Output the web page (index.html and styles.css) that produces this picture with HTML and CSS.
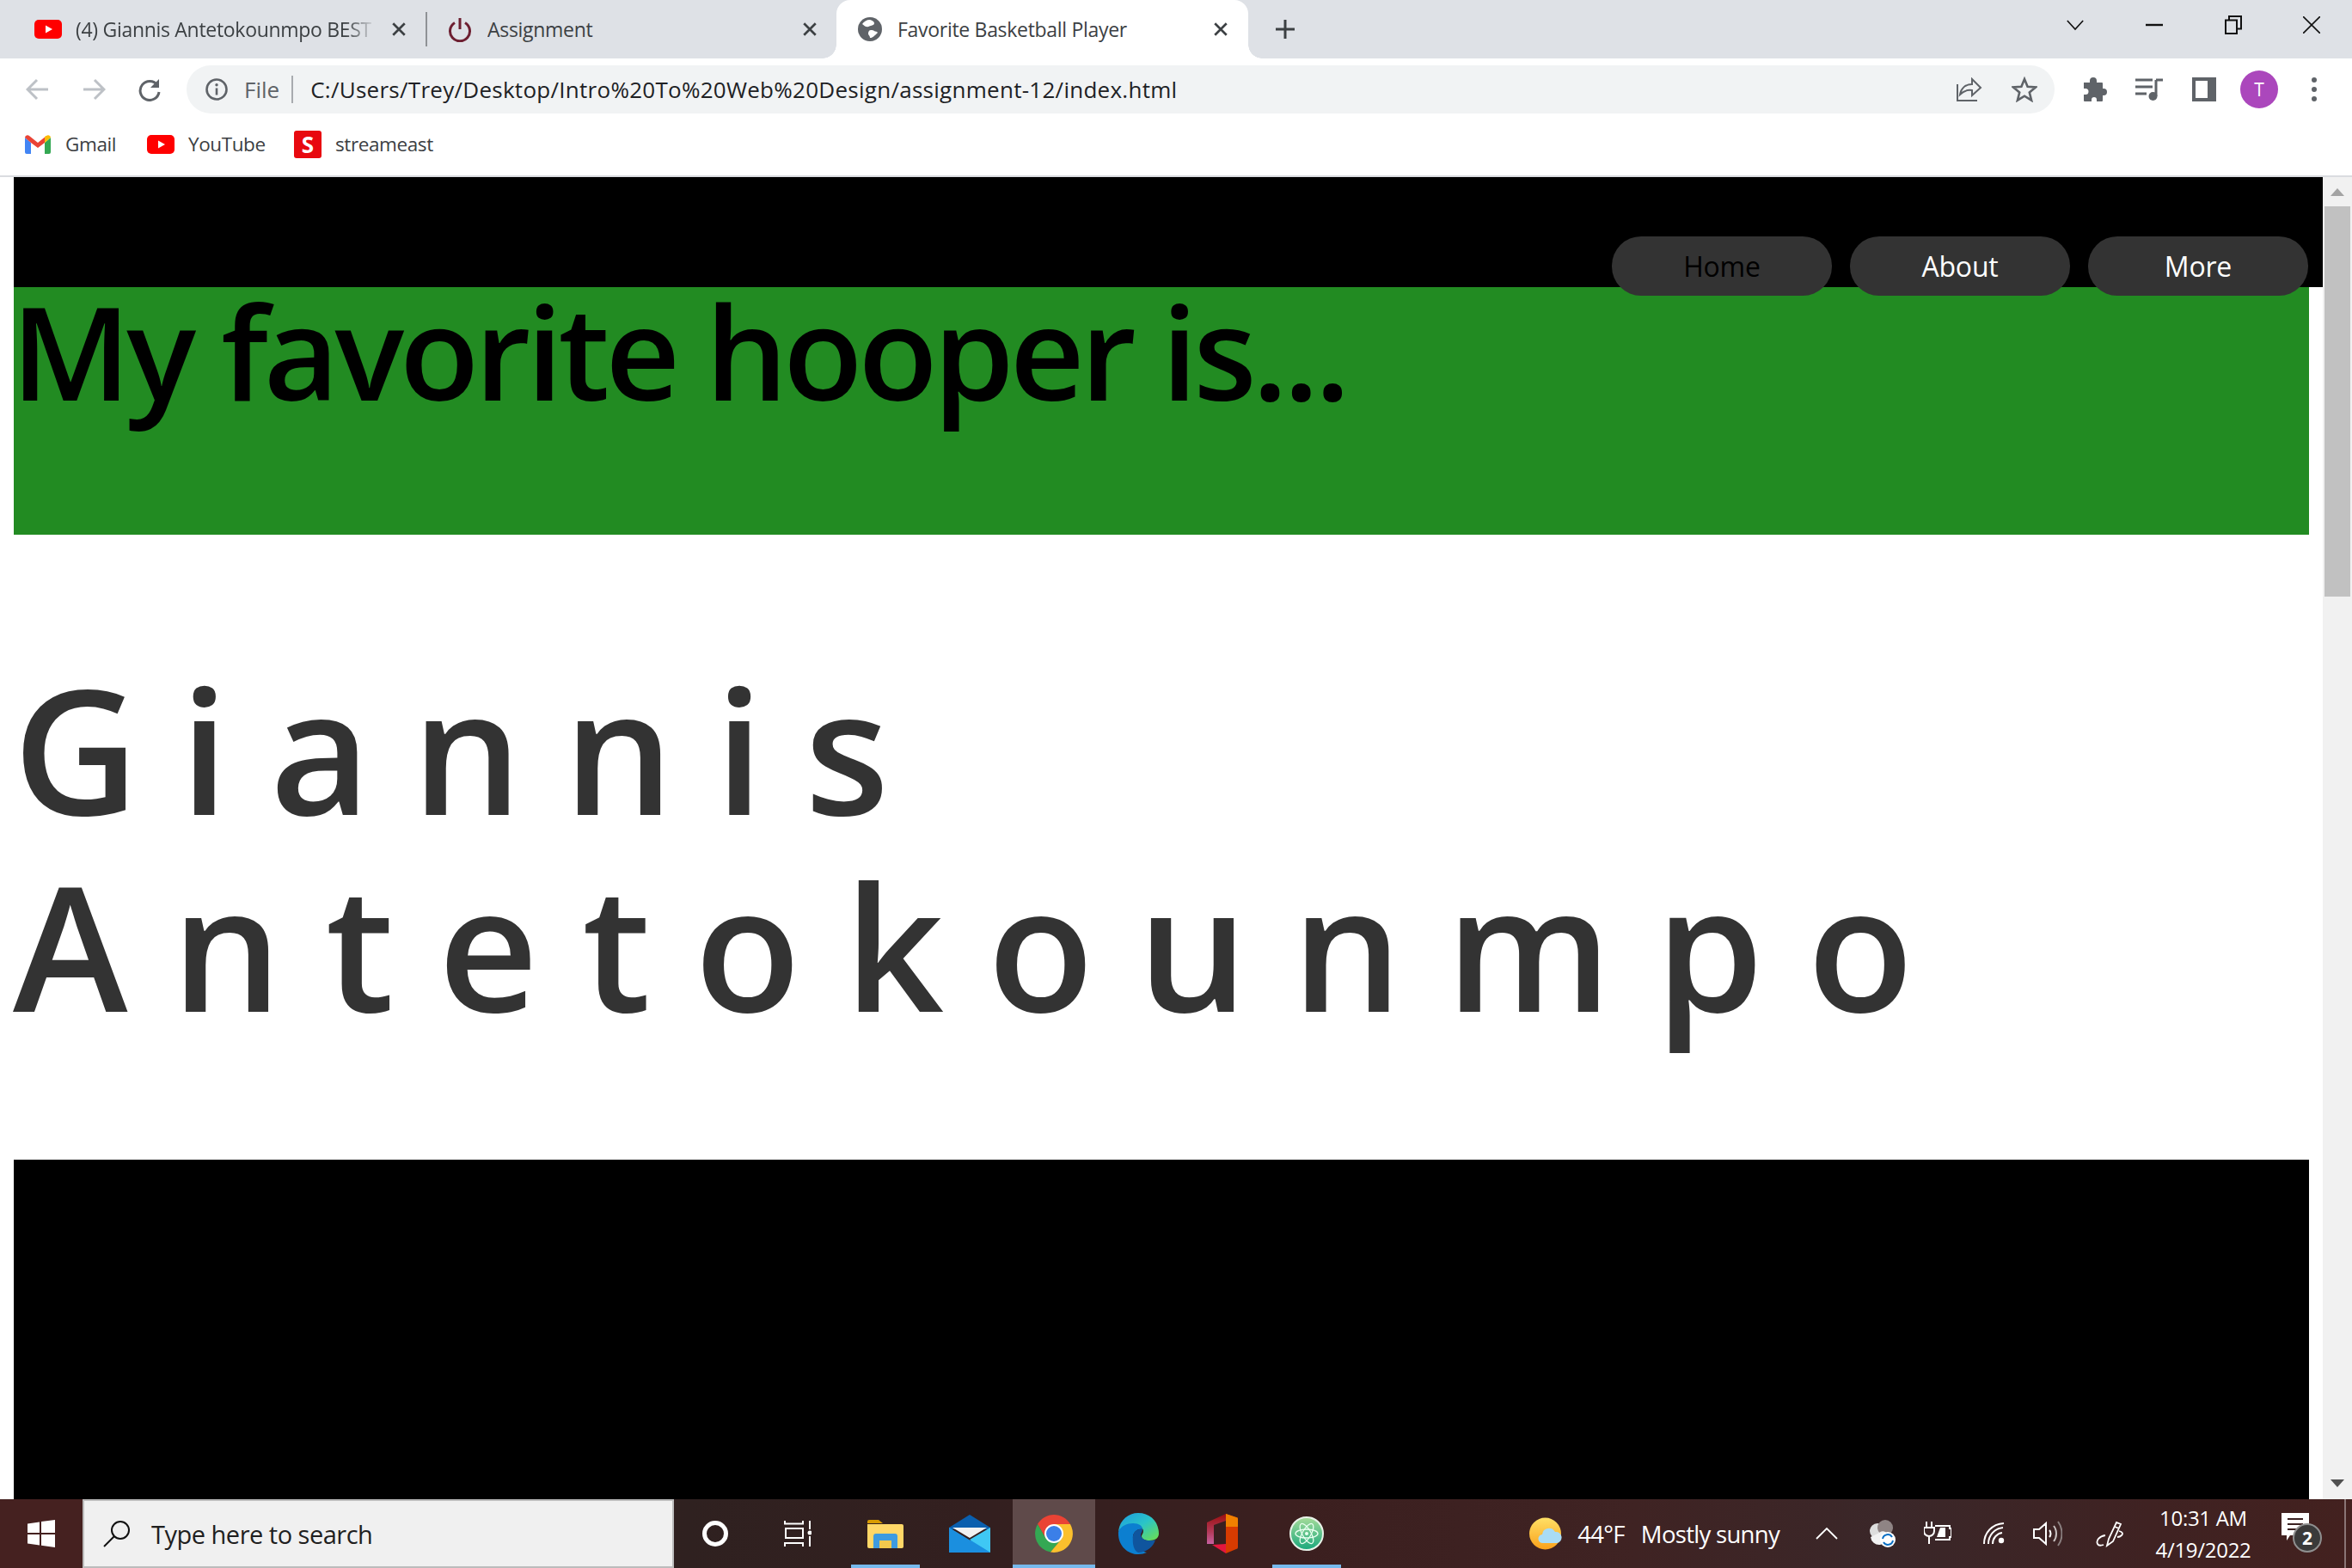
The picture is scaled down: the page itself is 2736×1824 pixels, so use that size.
FILE: index.html
```html
<!DOCTYPE html>
<html lang="en">
<head>
<meta charset="utf-8">
<title>Favorite Basketball Player</title>
<link rel="stylesheet" href="styles.css">
</head>
<body>
<div class="screen">
  <div class="tabstrip">
    <div class="tab tab-a">
      <svg class="fav-yt" viewBox="0 0 32 22"><rect width="32" height="22" rx="5" fill="#f00"/><path d="M13 6.500l8 4.500-8 4.500z" fill="#fff"/></svg>
      <span class="tab-title title-a">(4) Giannis Antetokounmpo BEST</span>
      <svg class="close" viewBox="0 0 16 16"><path d="M2 2l12 12M14 2L2 14" stroke="#3c4043" stroke-width="2.400"/></svg>
    </div>
    <div class="tab-sep"></div>
    <div class="tab tab-b">
      <svg class="fav-power" viewBox="0 0 30 30"><path d="M9 7.500a11.500 11.500 0 1 0 12 0" fill="none" stroke="#6d1f31" stroke-width="3"/><path d="M15 2v13" stroke="#6d1f31" stroke-width="3"/></svg>
      <span class="tab-title title-b">Assignment</span>
      <svg class="close" viewBox="0 0 16 16"><path d="M2 2l12 12M14 2L2 14" stroke="#3c4043" stroke-width="2.400"/></svg>
    </div>
    <div class="tab tab-c">
      <svg class="fav-globe" viewBox="0 0 28 28"><circle cx="14" cy="14" r="14" fill="#5f6368"/><path d="M14 3c-4 0-7 2-9 5 2 1 3 3 5 3 2 1 3-1 5-1 2-1 4-1 4-3 0-2-2-3-5-4zM15 15c-2 0-3 2-3 4 0 2 2 2 2 5 3 0 6-3 9-6-1-2-3-1-4-2-1-1-2-1-4-1z" fill="#fff"/></svg>
      <span class="tab-title title-c">Favorite Basketball Player</span>
      <svg class="close" viewBox="0 0 16 16"><path d="M2 2l12 12M14 2L2 14" stroke="#3c4043" stroke-width="2.400"/></svg>
    </div>
    <svg class="newtab" viewBox="0 0 24 24"><path d="M12 1v22M1 12h22" stroke="#3c4043" stroke-width="3"/></svg>
    <div class="grow"></div>
    <div class="winctl">
      <svg viewBox="0 0 24 14" class="wc-chev"><path d="M2 1l10 11L22 1" fill="none" stroke="#111" stroke-width="1.800"/></svg>
      <svg viewBox="0 0 20 4" class="wc-min"><path d="M0 2h20" stroke="#111" stroke-width="2.400"/></svg>
      <svg viewBox="0 0 20 22" class="wc-res"><path d="M1 5.500h13v15.500H1zM5 5V1h14v14.500h-5" fill="none" stroke="#111" stroke-width="2"/></svg>
      <svg viewBox="0 0 20 20" class="wc-x"><path d="M0 0l20 20M20 0L0 20" stroke="#111" stroke-width="1.600"/></svg>
    </div>
  </div>

  <div class="toolbar">
    <svg class="nav-ic" viewBox="0 0 28 26"><path d="M26 13H3M13 2L2 13l11 11" fill="none" stroke="#bdc1c6" stroke-width="3"/></svg>
    <svg class="nav-ic fwd" viewBox="0 0 28 26"><path d="M2 13h23M15 2l11 11-11 11" fill="none" stroke="#bdc1c6" stroke-width="3"/></svg>
    <svg class="nav-ic reload" viewBox="0 0 28 28"><path d="M23 9a11 11 0 1 0 2 8" fill="none" stroke="#5f6368" stroke-width="3"/><path d="M25 2v10H15z" fill="#5f6368"/></svg>
    <div class="omni">
      <svg class="info" viewBox="0 0 26 26"><circle cx="13" cy="13" r="11.500" fill="none" stroke="#5f6368" stroke-width="2.600"/><path d="M13 11.500v8" stroke="#5f6368" stroke-width="2.600"/><circle cx="13" cy="7.800" r="1.700" fill="#5f6368"/></svg>
      <span class="file">File</span>
      <span class="omni-sep"></span>
      <span class="url">C:/Users/Trey/Desktop/Intro%20To%20Web%20Design/assignment-12/index.html</span>
      <div class="grow"></div>
      <svg class="share" viewBox="0 0 30 28"><path d="M1 8v19h23M4 20c1-7 6-12 14-12V2l10 10-10 9v-6c-6-1-10 1-14 5z" fill="none" stroke="#5f6368" stroke-width="2"/></svg>
      <svg class="star" viewBox="0 0 30 30"><path d="M15 3l3.600 8.700 9.400.7-7.200 6.100 2.300 9.200L15 22.700l-8.100 5 2.300-9.200L2 12.400l9.400-.7z" fill="none" stroke="#5f6368" stroke-width="2.600"/></svg>
    </div>
    <svg class="puzzle" viewBox="0 0 28 28"><path d="M1 6h7V4a4 4 0 0 1 8 0v2h6a1 1 0 0 1 1 1v6h1a4 4 0 0 1 0 8h-1v6a1 1 0 0 1-1 1h-6v-2a3 3 0 0 0-6 0v2H2a1 1 0 0 1-1-1v-7h2a3.500 3.500 0 0 0 0-7H1z" fill="#5f6368"/></svg>
    <svg class="queue" viewBox="0 0 32 26"><path d="M0 2h20M0 10h20M0 18h13" stroke="#5f6368" stroke-width="3"/><path d="M24 2v19" stroke="#5f6368" stroke-width="3"/><path d="M24 2h8" stroke="#5f6368" stroke-width="3"/><circle cx="20.500" cy="21" r="5" fill="#5f6368"/></svg>
    <div class="panel"></div>
    <div class="avatar">T</div>
    <svg class="dots" viewBox="0 0 6 28"><circle cx="3" cy="3" r="3" fill="#5f6368"/><circle cx="3" cy="14" r="3" fill="#5f6368"/><circle cx="3" cy="25" r="3" fill="#5f6368"/></svg>
  </div>

  <div class="bookmarks">
    <div class="bm bm-g">
      <svg class="ic-gmail" viewBox="0 0 30 22"><path d="M0 3v17a2 2 0 0 0 2 2h5V9z" fill="#4285f4"/><path d="M30 3v17a2 2 0 0 1-2 2h-5V9z" fill="#34a853"/><path d="M0 3a3 3 0 0 1 5-2l10 8L25 1l-2 8-8 6-8-6-7-6z" fill="#ea4335"/><path d="M23 9V2l2-1a3 3 0 0 1 5 2z" fill="#fbbc04"/></svg>
      <span class="bm-label">Gmail</span>
    </div>
    <div class="bm bm-y">
      <svg class="fav-yt" viewBox="0 0 32 22"><rect width="32" height="22" rx="5" fill="#f00"/><path d="M13 6.500l8 4.500-8 4.500z" fill="#fff"/></svg>
      <span class="bm-label">YouTube</span>
    </div>
    <div class="bm">
      <div class="ic-s">S</div>
      <span class="bm-label">streameast</span>
    </div>
  </div>

  <div class="viewport">
    <main class="page">
      <header class="topbar">
        <nav class="nav">
          <a class="pill pill-dark">Home</a>
          <a class="pill">About</a>
          <a class="pill">More</a>
        </nav>
      </header>
      <section class="hero"><h1 class="hero-title">My favorite hooper is...</h1></section>
      <h2 class="player"><span class="first">Giannis</span> <span class="last">Antetokounmpo</span></h2>
      <section class="blackout"></section>
    </main>
    <aside class="scrollbar">
      <div class="sb-btn"><span class="tri-up"></span></div>
      <div class="sb-thumb"></div>
      <div class="grow"></div>
      <div class="sb-btn sb-end"><span class="tri-down"></span></div>
    </aside>
  </div>

  <footer class="taskbar">
    <div class="start">
      <svg class="winlogo" viewBox="0 0 32 32"><path d="M0 4.500l14-2V15H0zM16 2l16-2v15H16zM0 17h14v12.500l-14-2zM16 17h16v15l-16-2.300z" fill="#fff"/></svg>
    </div>
    <div class="search">
      <svg class="mag" viewBox="0 0 32 32"><circle cx="20" cy="12" r="10" fill="none" stroke="#111" stroke-width="2"/><path d="M13 19L1 31" stroke="#111" stroke-width="2"/></svg>
      <span class="search-text">Type here to search</span>
    </div>
    <div class="slot slot-cortana"><span class="cortana"></span></div>
    <div class="slot">
      <svg class="taskview" viewBox="0 0 32 32"><path d="M1 1v3.500h21V1M2 10h20v11H2zM1 31v-4h21v4M30 1v10M30 19v12" fill="none" stroke="#fff" stroke-width="2"/><circle cx="30" cy="15" r="2.500" fill="#fff"/></svg>
    </div>
    <div class="apps">
      <div class="slot on">
        <svg class="files" viewBox="0 0 42 34"><path d="M0 3a2 2 0 0 1 2-2h11l5 4h-18z" fill="#d89b00"/><path d="M0 6h40a2 2 0 0 1 2 2v24a2 2 0 0 1-2 2H2a2 2 0 0 1-2-2z" fill="#ffd767"/><path d="M7 34V20a3 3 0 0 1 3-3h22a3 3 0 0 1 3 3v14h-7V25H14v9z" fill="#3d9be0"/><path d="M14 25h14v9H14z" fill="#f3c94d"/></svg>
      </div>
      <div class="slot">
        <svg class="mail" viewBox="0 0 48 44"><path d="M0 15L24 0l24 15v2H0z" fill="#0a5fae"/><path d="M4 15h40L24 27z" fill="#f2f2f2"/><path d="M0 15l24 15 24-3v17H0z" fill="#1a9be6"/><path d="M48 15v29L24 29z" fill="#3fc8f4"/><path d="M0 15l24 14.500L48 44H0z" fill="#1b8fdf"/></svg>
      </div>
      <div class="slot on active">
        <svg class="chrome" viewBox="0 0 48 48"><path d="M24 13H43A22 22 0 0 0 5 13L14.500 29.500z" fill="#ea4335"/><path d="M14.500 29.500L5 13A22 22 0 0 0 20 45.600L33.500 29.500z" fill="#34a853"/><path d="M33.500 29.500L20 45.600A22 22 0 0 0 43 13H24z" fill="#fbc02d"/><circle cx="24" cy="24" r="11" fill="#fff"/><circle cx="24" cy="24" r="9" fill="#3b7fe8"/></svg>
      </div>
      <div class="slot">
        <svg class="edge" viewBox="0 0 48 48"><defs><linearGradient id="eg" x1="0" y1="0" x2="1" y2="1"><stop offset="0" stop-color="#1e9be0"/><stop offset=".5" stop-color="#2ac4c8"/><stop offset="1" stop-color="#6fe04a"/></linearGradient></defs><path d="M1 22C2 9 12 0 24 0c14 0 24 10 24 24 0 5-4 8-11 8-5 0-9-2-9-5 0-2 2-3 2-6 0-3-4-7-11-7C10 14 3 17 1 22z" fill="url(#eg)"/><path d="M1 22c2-6 9-10 17-10 7 0 11 3 11 7-5-1-10 2-11 8-1 8 5 17 16 19-3 1-6 2-10 2C11 48 0 37 1 22z" fill="#0c7fd0"/><path d="M29 19c0 3-2 4-2 7 1 4 5 6 10 6 3 0 6 0 7-1-2 8-10 15-20 15-5-2-7-10-6-19 1-6 6-9 11-8z" fill="#0f559e"/></svg>
      </div>
      <div class="slot">
        <svg class="office" viewBox="0 0 36 46"><defs><linearGradient id="og" x1="0" y1="0" x2="0" y2="1"><stop offset="0" stop-color="#9c0e0e"/><stop offset=".6" stop-color="#b33a5a"/><stop offset="1" stop-color="#c860a0"/></linearGradient></defs><path d="M0 10L22 0v8L8 13v22H0z" fill="url(#og)"/><path d="M22 0l12 4a2 2 0 0 1 2 2v33a2 2 0 0 1-2 2l-12 5z" fill="#d83b01"/><path d="M22 0l12 4a2 2 0 0 1 2 2v9H22z" fill="#f08000"/><path d="M6 36l16-1v11z" fill="#e3173e"/></svg>
      </div>
      <div class="slot on">
        <svg class="atom" viewBox="0 0 40 40"><defs><linearGradient id="ag" x1="0" y1="0" x2="0" y2="1"><stop offset="0" stop-color="#a6dc9a"/><stop offset="1" stop-color="#1aa87c"/></linearGradient></defs><circle cx="20" cy="20" r="19" fill="url(#ag)" stroke="#e8f2e8" stroke-width="2"/><g fill="none" stroke="#eafff0" stroke-width="1.300"><ellipse cx="20" cy="20" rx="13" ry="5"/><ellipse cx="20" cy="20" rx="13" ry="5" transform="rotate(60 20 20)"/><ellipse cx="20" cy="20" rx="13" ry="5" transform="rotate(120 20 20)"/></g><circle cx="20" cy="20" r="2" fill="#eafff0"/></svg>
      </div>
    </div>
    <div class="grow"></div>
    <div class="tray">
      <svg class="weather" viewBox="0 0 38 38"><defs><linearGradient id="sg" x1="0" y1="0" x2="0" y2="1"><stop offset="0" stop-color="#ffe066"/><stop offset="1" stop-color="#f9a11b"/></linearGradient></defs><circle cx="18.500" cy="19" r="18.500" fill="url(#sg)"/><path d="M16 30a5 5 0 0 1-1-10 8 8 0 0 1 15-3 6.500 6.500 0 0 1 2 13z" fill="#a9dcf5"/></svg>
      <span class="tray-text temp">44°F</span>
      <span class="tray-text cond">Mostly sunny</span>
      <svg class="caret" viewBox="0 0 26 14"><path d="M1 13L13 1l12 12" fill="none" stroke="#fff" stroke-width="1.800"/></svg>
      <svg class="onedrive" viewBox="0 0 32 32"><circle cx="11" cy="13" r="9" fill="#ddd"/><circle cx="20" cy="9" r="9" fill="#8f8484"/><path d="M3 20a9 9 0 0 0 20-2 6 6 0 0 0-10-3z" fill="#f2f2f2"/><circle cx="23" cy="23" r="9" fill="#fff"/><path d="M17 22a6 6 0 0 1 11-2M29 24a6 6 0 0 1-11 2" fill="none" stroke="#0a6fc4" stroke-width="2"/></svg>
      <svg class="battery" viewBox="0 0 32 28"><path d="M3 0v7M9 0v7M0 7h12v4a6 6 0 0 1-12 0zM6 16v10" fill="none" stroke="#fff" stroke-width="2"/><path d="M13 5h17v3h2v10h-2v3H13" fill="none" stroke="#fff" stroke-width="2"/><path d="M15 18l4-11h6v11z" fill="#fff"/></svg>
      <svg class="wifi" viewBox="0 0 26 26"><g fill="none" stroke-width="2"><path d="M1 25C1 12 10 2 24 1" stroke="#fff"/><path d="M6 25C6 15 13 7 23 6" stroke="#fff"/><path d="M11 25c0-7 5-12 11-13" stroke="#fff"/></g><circle cx="21" cy="21" r="3.200" fill="#fff"/></svg>
      <svg class="volume" viewBox="0 0 34 30"><path d="M1 10h6l8-7v24l-8-7H1z" fill="none" stroke="#fff" stroke-width="2"/><path d="M19 11c2 2 2 6 0 8" fill="none" stroke="#fff" stroke-width="2"/><path d="M24 6c4 5 4 13 0 18" fill="none" stroke="#c9c2c2" stroke-width="2"/><path d="M29 1c6 8 6 20 0 28" fill="none" stroke="#8a7f7f" stroke-width="2"/></svg>
      <svg class="pen" viewBox="0 0 32 32"><path d="M13 30l2-8L24 3l5 2-9 20zM22 8l5 2M11 18C4 19 0 24 2 28c1 2 4 2 7 1M27 13c4 1 5 3 3 5-1 1-3 2-5 2" fill="none" stroke="#fff" stroke-width="1.800"/></svg>
      <div class="clock"><span>10:31 AM</span><span>4/19/2022</span></div>
      <div class="notif">
        <svg class="notif-ic" viewBox="0 0 32 32"><path d="M0 0h32v26H10l-4 6v-6H0z" fill="#fff"/><path d="M7 7h18M7 13h18M7 19h12" stroke="#3b2222" stroke-width="2"/></svg>
        <span class="badge">2</span>
      </div>
      <div class="edge-line"></div>
    </div>
  </footer>
</div>
</body>
</html>
```
FILE: styles.css
```css
* { box-sizing: border-box; }
html, body { margin: 0; padding: 0; height: 1824px; overflow: hidden; }
body { font-family: "Open Sans", "Noto Sans", sans-serif; background: #fff; }
svg { display: block; flex: none; }
.screen { width: 2736px; height: 1824px; display: flex; flex-direction: column; overflow: hidden; }
.grow { flex: 1; }

/* tab strip */
.tabstrip { height: 68px; flex: none; background: #dee1e6; display: flex; align-items: center; }
.tab { height: 68px; display: flex; align-items: center; flex: none; font-size: 23px; color: #3c4043; }
.tab-a { width: 495px; padding-left: 40px; }
.tab-b { width: 475px; padding-left: 23px; }
.tab-c { width: 479px; padding-left: 25px; background: #fff; border-radius: 16px 16px 0 0; margin-left: 1px; position: relative; }
.tab-c::before, .tab-c::after { content: ""; position: absolute; bottom: 0; width: 16px; height: 16px; }
.tab-c::before { left: -16px; background: radial-gradient(circle at 0 0, transparent 15.500px, #fff 16px); }
.tab-c::after { right: -16px; background: radial-gradient(circle at 100% 0, transparent 15.500px, #fff 16px); }
.tab-sep { width: 2px; height: 40px; background: #8f9296; flex: none; }
.tab-title { white-space: nowrap; overflow: hidden; letter-spacing: -0.300px; }
.title-a { width: 349px; margin-left: 16px; -webkit-mask-image: linear-gradient(90deg, #000 90%, transparent); mask-image: linear-gradient(90deg, #000 90%, transparent); }
.title-b { width: 366px; margin-left: 17px; }
.title-c { width: 367px; margin-left: 18px; }
.close { width: 18px; height: 18px; margin-left: 18px; }
.tab-b .close, .tab-c .close { margin-left: 0; }
.fav-yt { width: 32px; height: 22px; }
.fav-power { width: 30px; height: 30px; }
.fav-globe { width: 28px; height: 28px; }
.newtab { width: 24px; height: 24px; margin-left: 31px; }
.winctl { display: flex; align-items: center; height: 58px; align-self: flex-start; padding-right: 37px; }
.wc-chev { width: 22px; height: 13px; }
.wc-min { width: 20px; height: 4px; margin-left: 71px; }
.wc-res { width: 20px; height: 22px; margin-left: 72px; }
.wc-x { width: 20px; height: 20px; margin-left: 71px; }

/* toolbar */
.toolbar { height: 68px; flex: none; background: #fff; display: flex; align-items: center; padding: 4px 0 0 30px; }
.nav-ic { width: 28px; height: 26px; }
.fwd { margin-left: 37px; }
.reload { height: 28px; margin-left: 37px; }
.omni { width: 2173px; height: 56px; margin-left: 29px; background: #f1f3f4; border-radius: 28px; display: flex; align-items: center; padding-left: 22px; }
.info { width: 26px; height: 26px; }
.file { font-size: 26px; color: #5f6368; margin-left: 19px; }
.omni-sep { width: 2px; height: 32px; background: #a8abaf; margin-left: 14px; }
.url { font-size: 26px; color: #202124; margin-left: 20px; letter-spacing: 0.270px; white-space: nowrap; }
.share { width: 30px; height: 28px; }
.star { width: 30px; height: 30px; margin: 0 20px 0 34px; }
.puzzle { width: 28px; height: 28px; margin-left: 33px; }
.queue { width: 32px; height: 26px; margin-left: 33px; }
.panel { width: 28px; height: 28px; border: 4px solid #5f6368; border-right-width: 10px; margin-left: 34px; }
.avatar { width: 44px; height: 44px; border-radius: 50%; background: #ab47bc; color: #fff; margin-left: 28px; display: flex; align-items: center; justify-content: center; font-size: 21px; }
.dots { width: 6px; height: 28px; margin-left: 39px; }

/* bookmarks */
.bookmarks { height: 70px; flex: none; background: #fff; border-bottom: 2px solid #dadce0; display: flex; align-items: center; padding: 0 0 5px 29px; }
.bm { display: flex; align-items: center; }
.bm-g { width: 142px; }
.bm-y { width: 171px; }
.bm-label { font-size: 22.500px; color: #3c4043; letter-spacing: -0.400px; }
.ic-gmail { width: 30px; height: 22px; margin-right: 17px; }
.bm-y .fav-yt { margin-right: 16px; }
.ic-s { width: 32px; height: 32px; border-radius: 3px; background: #e8090f; color: #fff; font: 700 26px/32px "Open Sans", sans-serif; text-align: center; margin-right: 16px; }

/* page viewport */
.viewport { flex: 1; min-height: 0; display: flex; background: #fff; }
.page { width: 2702px; height: 100%; padding-left: 16px; overflow: hidden; flex: none; }
.topbar { height: 128px; background: #000; padding-top: 69px; position: relative; z-index: 1; }
.nav { display: flex; justify-content: flex-end; gap: 21px; padding-right: 17px; }
.pill { width: 256px; height: 69px; border-radius: 34px; background: #333; color: #fff; font-size: 32px; font-weight: 500; display: flex; align-items: center; justify-content: center; letter-spacing: -0.200px; }
.pill-dark { color: #000; }
.hero { height: 288px; width: 2670px; background: #228b22; }
.hero-title { margin: 0 0 0 -3px; font-size: 151px; font-weight: 600; line-height: 147px; color: #000; letter-spacing: -5px; white-space: nowrap; }
.player { margin: 133px 0 136px -1px; width: 2670px; font-size: 202px; font-weight: 600; line-height: 229px; color: #333; }
.first, .last { display: inline-block; height: 229px; }
.first { letter-spacing: 48px; }
.last { letter-spacing: 51px; }
.blackout { width: 2670px; height: 600px; background: #000; }

/* scrollbar */
.scrollbar { width: 34px; flex: none; background: #f1f1f1; display: flex; flex-direction: column; align-items: center; }
.sb-btn { height: 34px; width: 100%; display: flex; align-items: center; justify-content: center; flex: none; }
.sb-end { padding-bottom: 3px; }
.tri-up { width: 0; height: 0; border: 8px solid transparent; border-top: 0; border-bottom: 9px solid #a3a3a3; }
.tri-down { width: 0; height: 0; border: 8px solid transparent; border-bottom: 0; border-top: 9px solid #505050; }
.sb-thumb { width: 30px; height: 454px; background: #c1c1c1; flex: none; }

/* taskbar */
.taskbar { height: 80px; flex: none; display: flex; align-items: center; background: linear-gradient(90deg, #452120 0, #452120 90px, #2f2120 800px, #331f1f 1150px, #3b1f1f 1500px, #3f2323 1900px, #3a2729 2200px, #3f2222 2500px, #43211f 2736px); color: #fff; }
.start { width: 96px; height: 80px; display: flex; align-items: center; justify-content: center; flex: none; }
.winlogo { width: 32px; height: 32px; }
.search { width: 688px; height: 80px; background: #f0f0f0; border: 2px solid #bcbcbc; display: flex; align-items: center; padding-left: 22px; flex: none; }
.mag { width: 32px; height: 32px; }
.search-text { font-size: 29px; color: #1f1f1f; margin-left: 24px; letter-spacing: -0.500px; }
.slot { width: 96px; height: 80px; display: flex; align-items: center; justify-content: center; flex: none; position: relative; }
.on::after { content: ""; position: absolute; left: 8px; right: 8px; bottom: 0; height: 4px; background: #76b9ed; }
.active { background: #5f4a4a; }
.active::after { left: 0; right: 0; }
.cortana { width: 30px; height: 30px; border-radius: 50%; border: 5px solid #fff; }
.taskview { width: 32px; height: 32px; }
.apps { display: flex; gap: 2px; margin-left: 6px; }
.files { width: 42px; height: 34px; }
.mail { width: 48px; height: 44px; }
.chrome { width: 48px; height: 48px; }
.edge { width: 48px; height: 48px; }
.office { width: 36px; height: 46px; }
.atom { width: 40px; height: 40px; }
.tray { display: flex; align-items: center; height: 80px; }
.weather { width: 38px; height: 38px; }
.tray-text { font-size: 27.500px; letter-spacing: -0.700px; white-space: nowrap; }
.temp { margin-left: 18px; }
.cond { margin-left: 19px; }
.caret { width: 26px; height: 14px; margin-left: 42px; }
.onedrive { width: 32px; height: 32px; margin-left: 35px; }
.battery { width: 32px; height: 28px; margin-left: 33px; }
.wifi { width: 26px; height: 26px; margin-left: 37px; }
.volume { width: 34px; height: 30px; margin-left: 32px; }
.pen { width: 32px; height: 32px; margin-left: 39px; }
.clock { width: 130px; margin-left: 28px; display: flex; flex-direction: column; align-items: center; gap: 7px; font-size: 24px; line-height: 30px; white-space: nowrap; letter-spacing: -0.300px; }
.notif { width: 50px; height: 48px; margin-left: 26px; position: relative; }
.notif-ic { width: 32px; height: 32px; }
.badge { position: absolute; left: 13px; top: 12px; width: 34px; height: 34px; border-radius: 50%; background: #3a3a3a; border: 2px solid #8f8f8f; color: #fff; font-size: 21px; font-weight: 700; display: flex; align-items: center; justify-content: center; }
.edge-line { width: 2px; height: 80px; background: #8a7575; margin: 0 7px 0 23px; flex: none; }
```
